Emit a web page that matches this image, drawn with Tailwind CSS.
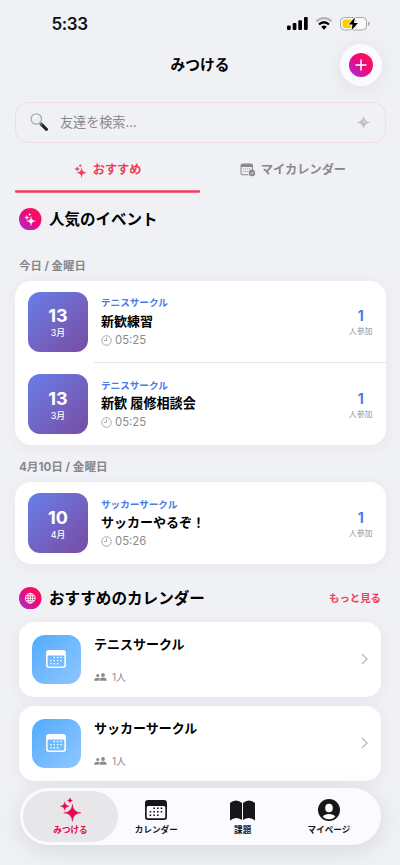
<!DOCTYPE html>
<html lang="ja">
<head>
<meta charset="utf-8">
<meta name="viewport" content="width=device-width, initial-scale=1">
<title>みつける</title>
<script src="https://cdn.jsdelivr.net/npm/@tailwindcss/browser@4"></script>
</head>
<body class="relative h-[865px] w-[400px] overflow-hidden bg-[#f0f1f5] font-['Inter','Noto_Sans_CJK_JP',sans-serif] leading-none text-black">
<svg width="0" height="0" class="absolute">
  <defs>
    <linearGradient id="tint" x1="0" y1="1" x2="1" y2="0"><stop offset="0" stop-color="#9b35e0"/><stop offset=".5" stop-color="#f0087c"/><stop offset="1" stop-color="#ff1744"/></linearGradient>
    <symbol id="sparkles" viewBox="0 0 24 24" overflow="visible"><path d="M14 7Q14.500 15.500 23 16Q14.500 16.500 14 25Q13.500 16.500 5 16Q13.500 15.500 14 7Z" stroke="currentColor" stroke-width=".5"/><path d="M6 4.500Q6.300 8.700 10.500 9Q6.300 9.300 6 13.500Q5.700 9.300 1.500 9Q5.700 8.700 6 4.500Z" stroke="currentColor" stroke-width=".4"/><path d="M11.500 0Q11.900 2.600 14.500 3Q11.900 3.400 11.500 6Q11.100 3.400 8.500 3Q11.100 2.600 11.500 0Z"/></symbol>
    <symbol id="clock" viewBox="0 0 12 12"><g fill="none" stroke="#8a8a8e" stroke-width=".8"><circle cx="6" cy="6" r="5.200"/><path d="M6 2.600V6H3"/></g></symbol>
    <symbol id="calendar" viewBox="0 0 22 20"><path fill-rule="evenodd" d="M3 0H19Q22 0 22 3V17Q22 20 19 20H3Q0 20 0 17V3Q0 0 3 0ZM3.200 6Q1.700 6 1.700 7.500V16.800Q1.700 18.300 3.200 18.300H18.800Q20.300 18.300 20.300 16.800V7.500Q20.300 6 18.800 6Z"/><path d="M8.300 7.500h1.600v1.600H8.300zM12 7.500h1.600v1.600H12zM15.700 7.500h1.600v1.600h-1.600zM4.600 11h1.600v1.600H4.600zM8.300 11h1.600v1.600H8.300zM12 11h1.600v1.600H12zM15.700 11h1.600v1.600h-1.600zM4.600 14.500h1.600v1.600H4.600zM8.300 14.500h1.600v1.600H8.300zM12 14.500h1.600v1.600H12z"/></symbol>
    <symbol id="people" viewBox="0 0 26 16"><circle cx="7.500" cy="5" r="3.200"/><circle cx="18" cy="4" r="3.800"/><path d="M0 15.500Q0 9.500 7.500 9.500Q10 9.500 11.500 10.500Q9.300 12.500 9.300 15.500ZM10.800 15.500Q10.800 9.200 18 9.200T25.500 15.500Z"/></symbol>
  </defs>
</svg>

<header>
  <div class="flex h-11 items-end justify-between pr-[30px] pl-[51.500px]">
    <div class="h-[28px] text-[17px] font-semibold tracking-[-0.4px] text-[#111]">5:33</div>
    <div class="flex h-[28px] items-start gap-[7px]">
      <svg class="mt-px" width="21" height="13"><rect y="8.500" width="3.700" height="4.500" rx="1"/><rect x="5.700" y="6" width="3.700" height="7" rx="1"/><rect x="11.300" y="3.200" width="3.700" height="9.800" rx="1"/><rect x="17" width="3.700" height="13" rx="1"/></svg>
      <svg class="mt-px" width="18" height="13" fill="none"><path d="M1.300 4.500Q9-2.500 16.700 4.500" stroke="#b7b7bb" stroke-width="2.300"/><path d="M4 7.500Q9 3 14 7.500" stroke="#000" stroke-width="2.300"/><path d="M6.200 9.800Q9 7.300 11.800 9.800L9 12.800Z" fill="#000"/></svg>
      <svg class="mt-px" width="30" height="14"><rect x=".5" y=".5" width="26" height="12.500" rx="4" fill="#fafafa" stroke="#a7a7ab"/><path d="M5 2.500H16V11H5Q2.500 11 2.500 8.500V5Q2.500 2.500 5 2.500Z" fill="#ffcc00"/><path d="M28 4.800Q29.800 5.300 29.800 6.800T28 8.900Z" fill="#a7a7ab"/><path d="M14.800.5L8.700 7.500H12.500L11.500 13.200L18 5.900H14Z" fill="#000" stroke="#fafafa" stroke-width="1.600" paint-order="stroke"/></svg>
    </div>
  </div>
  <div class="grid h-[57.500px] grid-cols-[60px_1fr_60px]">
    <h1 class="col-start-2 pt-[13.500px] text-center text-[14.700px] font-bold">みつける</h1>
    <button class="flex size-[42px] items-center justify-center rounded-full bg-[#fafaff] shadow-[0_3px_22px_rgba(0,0,0,0.07)]" aria-label="追加">
      <svg width="24" height="24"><circle cx="12" cy="12" r="12" fill="url(#tint)"/><path d="M12 6.500V17.500M6.500 12H17.500" stroke="#fff" stroke-width="1.600"/></svg>
    </button>
  </div>
</header>

<main>
  <div class="mx-[15px] flex h-[41.500px] w-[370.500px] items-center rounded-[13px] border border-[#f7dbe3] px-[14px]">
    <svg width="18" height="18"><path d="M11.200 11.200L16.500 16.300" stroke="#222" stroke-width="3" stroke-linecap="round"/><path d="M9.800 9.800L12 12" stroke="#777" stroke-width="1.500"/><circle cx="6.300" cy="6" r="5.200" fill="#edf0f2" stroke="#aaa" stroke-width="1.300"/><path d="M3.300 5Q4.200 2.700 6.800 2.900" stroke="#fff" fill="none"/></svg>
    <span class="ml-[12px] pt-[1px] text-[13.100px] text-[#88888c]">友達を検索...</span>
    <svg class="ml-auto" width="15" height="15"><path d="M7.500.5Q8.200 6.800 14.500 7.500Q8.200 8.200 7.500 14.500Q6.800 8.200.5 7.500Q6.800 6.800 7.500.5Z" fill="#bfbfc3"/><path d="M7.500 4L8.400 6.600 11 7.500H7.500Z" fill="#eee"/></svg>
  </div>

  <nav class="mx-[15px] grid h-[50px] w-[370.500px] grid-cols-2 text-[12.200px] font-bold">
    <div class="flex flex-col text-[#f03b57]"><div class="flex flex-1 items-center justify-center gap-[6px] pt-[7px]"><svg width="13" height="13" fill="currentColor" class="overflow-visible"><use href="#sparkles"/></svg><span>おすすめ</span></div><svg width="185" height="3" class="block"><rect y=".3" width="185" height="2.400" rx="1" fill="#f03b57"/></svg></div>
    <div class="flex items-center justify-center gap-[5px] pt-[4px] text-[#88888d]"><svg width="16" height="14"><path fill-rule="evenodd" fill="#88888d" d="M2.500.5H11Q13 .5 13 2.500V7.500H11.800V4H1.500V10Q1.500 11.300 2.800 11.300H8.500V12.300H2.500Q.5 12.300.5 10.300V2.500Q.5.5 2.500.5Z"/><path d="M3 6H10.500M3 8.500H8.500" stroke="#a5a5aa" stroke-dasharray="1.300 .7"/><circle cx="12" cy="10" r="3.200" fill="#88888d"/><path d="M10.500 10L11.600 11.100L13.600 8.900" stroke="#fff" stroke-width=".8" fill="none"/></svg>マイカレンダー</div>
  </nav>

  <section>
    <h2 class="flex h-[52px] items-center gap-[7.500px] pl-[19px] text-[15.500px] font-bold">
      <svg width="22.500" height="22.500" viewBox="0 0 23 23" class="text-white"><circle cx="11.500" cy="11.500" r="11.500" fill="url(#tint)"/><use href="#sparkles" x="5" y="5" width="12.500" height="12.500" fill="#fff"/></svg><span class="pt-[1px]">人気のイベント</span></h2>
    <h3 class="flex h-[35.500px] items-center pt-[8px] pl-[19px] text-[11.400px] font-bold text-[#88888c]">今日 / 金曜日</h3>
    <div class="mx-[15px] h-[164.500px] w-[370.500px] rounded-[16px] bg-white shadow-[0_2px_14px_rgba(70,40,100,0.06)]">
      <article class="flex h-[81.500px] items-start pt-[11px] pl-[13px]">
        <div class="flex size-[60px] flex-col items-center rounded-[12px] bg-linear-to-br from-[#667eea] to-[#764ba2] pt-[15.500px] text-white"><b class="text-[18px]">13</b><span class="mt-[4px] text-[8.800px] font-medium">3月</span></div>
        <div class="ml-[13px] pt-[6.500px]"><div class="text-[9.600px] font-bold text-[#477be8]">テニスサークル</div><div class="mt-[7px] text-[13px] font-bold">新歓練習</div><div class="mt-[7px] flex items-center gap-[3px] text-[11.300px] text-[#8a8a8e]"><svg width="11" height="11"><use href="#clock"/></svg>05:25</div></div>
        <div class="mr-[13px] ml-auto flex flex-col items-center pt-[17.500px]"><b class="text-[14px] text-[#477be8]">1</b><span class="mt-[5px] text-[7.900px] text-[#949499]">人参加</span></div>
      </article>
      <article class="flex h-[83px] items-start pl-[13px]">
        <div class="mt-[12px] flex size-[60px] flex-col items-center rounded-[12px] bg-linear-to-br from-[#667eea] to-[#764ba2] pt-[15.500px] text-white"><b class="text-[18px]">13</b><span class="mt-[4px] text-[8.800px] font-medium">3月</span></div>
        <div class="ml-[6px] flex h-full flex-1 border-t border-[#e7e7ea] pt-[11px] pl-[7px]">
          <div class="pt-[6.500px]"><div class="text-[9.600px] font-bold text-[#477be8]">テニスサークル</div><div class="mt-[7px] text-[13.100px] font-bold">新歓 履修相談会</div><div class="mt-[7px] flex items-center gap-[3px] text-[11.300px] text-[#8a8a8e]"><svg width="11" height="11"><use href="#clock"/></svg>05:25</div></div>
          <div class="mr-[13px] ml-auto flex flex-col items-center pt-[17.500px]"><b class="text-[14px] text-[#477be8]">1</b><span class="mt-[5px] text-[7.900px] text-[#949499]">人参加</span></div>
        </div>
      </article>
    </div>
    <h3 class="flex h-[37px] items-center pt-[9px] pl-[19px] text-[11.600px] font-bold text-[#88888c]">4月10日 / 金曜日</h3>
    <div class="mx-[15px] h-[82px] w-[370.500px] rounded-[16px] bg-white shadow-[0_2px_14px_rgba(70,40,100,0.06)]">
      <article class="flex items-start pt-[11px] pl-[13px]">
        <div class="flex size-[60px] flex-col items-center rounded-[12px] bg-linear-to-br from-[#667eea] to-[#764ba2] pt-[15.500px] text-white"><b class="text-[18px]">10</b><span class="mt-[4px] text-[8.800px] font-medium">4月</span></div>
        <div class="ml-[13px] pt-[6.500px]"><div class="text-[9.600px] font-bold text-[#477be8]">サッカーサークル</div><div class="mt-[7px] text-[13px] font-bold">サッカーやるぞ！</div><div class="mt-[7px] flex items-center gap-[3px] text-[11.300px] text-[#8a8a8e]"><svg width="11" height="11"><use href="#clock"/></svg>05:26</div></div>
        <div class="mr-[13px] ml-auto flex flex-col items-center pt-[17.500px]"><b class="text-[14px] text-[#477be8]">1</b><span class="mt-[5px] text-[7.900px] text-[#949499]">人参加</span></div>
      </article>
    </div>
  </section>

  <section>
    <div class="flex h-[58px] items-center justify-between px-[19px] pt-[9.500px]">
      <h2 class="flex items-center gap-[7.500px] text-[15.600px] font-bold"><svg width="22.500" height="22.500" viewBox="0 0 23 23"><circle cx="11.500" cy="11.500" r="11.500" fill="url(#tint)"/><g fill="none" stroke="#fff" stroke-width=".9"><circle cx="11.500" cy="11.500" r="5"/><ellipse cx="11.500" cy="11.500" rx="2.300" ry="5"/><path d="M6.500 11.500H16.500M11.500 6.500V16.500M7.300 9H15.700M7.300 14H15.700"/></g></svg><span class="pt-[2px]">おすすめのカレンダー</span></h2>
      <a class="pt-[2px] text-[10.400px] font-bold text-[#f0405c]">もっと見る</a>
    </div>
    <div class="mx-[19px] flex flex-col gap-[9.500px]">
      <article class="flex h-[74.500px] items-center rounded-[15px] bg-white px-[13px] shadow-[0_2px_14px_rgba(70,40,100,0.07)]">
        <div class="flex size-[48.500px] items-center justify-center rounded-[13px] bg-linear-to-br from-[#4facfe] to-[#8fc6ff] text-white"><svg width="20" height="18" fill="currentColor"><use href="#calendar"/></svg></div>
        <div class="ml-[13.500px] h-[48.500px] pt-[2.500px]"><div class="text-[13px] font-bold">テニスサークル</div><div class="mt-[21px] flex items-center gap-[5px] text-[10px] text-[#8a8a8e]"><svg width="13" height="8" fill="currentColor"><use href="#people"/></svg>1人</div></div>
        <svg class="ml-auto" width="7" height="12" fill="none"><path d="M1 1L6 6L1 11" stroke="#bcbcc0" stroke-width="1.400"/></svg>
      </article>
      <article class="flex h-[74.500px] items-center rounded-[15px] bg-white px-[13px] shadow-[0_2px_14px_rgba(70,40,100,0.07)]">
        <div class="flex size-[48.500px] items-center justify-center rounded-[13px] bg-linear-to-br from-[#4facfe] to-[#8fc6ff] text-white"><svg width="20" height="18" fill="currentColor"><use href="#calendar"/></svg></div>
        <div class="ml-[13.500px] h-[48.500px] pt-[2.500px]"><div class="text-[13px] font-bold">サッカーサークル</div><div class="mt-[21px] flex items-center gap-[5px] text-[10px] text-[#8a8a8e]"><svg width="13" height="8" fill="currentColor"><use href="#people"/></svg>1人</div></div>
        <svg class="ml-auto" width="7" height="12" fill="none"><path d="M1 1L6 6L1 11" stroke="#bcbcc0" stroke-width="1.400"/></svg>
      </article>
    </div>
  </section>
</main>

<nav class="absolute bottom-[20px] left-[19.500px] flex h-[57.500px] w-[361.500px] justify-between rounded-full bg-[#fafaff] p-[3.500px] text-[8.600px] font-bold text-[#17171a] shadow-[0_5px_26px_rgba(0,0,0,0.10)]">
  <div class="flex w-[95px] flex-col items-center rounded-full bg-[#e7e7ea] pt-[5.500px] text-[#e8074f]"><svg width="23" height="24" class="overflow-visible" fill="currentColor"><use href="#sparkles"/></svg><span class="mt-[5.500px]">みつける</span></div>
  <div class="-ml-[8px] flex w-[80px] flex-col items-center pt-[8.500px]"><svg width="22" height="20" fill="currentColor"><use href="#calendar"/></svg><span class="mt-[6.500px]">カレンダー</span></div>
  <div class="flex w-[80px] flex-col items-center pt-[8.500px]"><svg width="25" height="21" fill="currentColor"><path d="M0 3Q2.500.5 6 .5T12 3V20Q9 18 6 18T0 20.500ZM13 3Q15.500.5 19 .5T25 3V20.500Q22.500 18 19 18T13 20Z"/></svg><span class="mt-[5.500px]">課題</span></div>
  <div class="mr-[8.500px] flex w-[80px] flex-col items-center pt-[7.500px]"><svg width="22" height="22"><circle cx="11" cy="11" r="11" fill="currentColor"/><ellipse cx="11" cy="9" rx="3.800" ry="4.300" fill="#fff"/><path d="M4.700 17.800Q6.500 15 11 15T17.300 17.800Q14.800 20.300 11 20.300T4.700 17.800Z" fill="#fff"/></svg><span class="mt-[5.500px]">マイページ</span></div>
</nav>
</body>
</html>
